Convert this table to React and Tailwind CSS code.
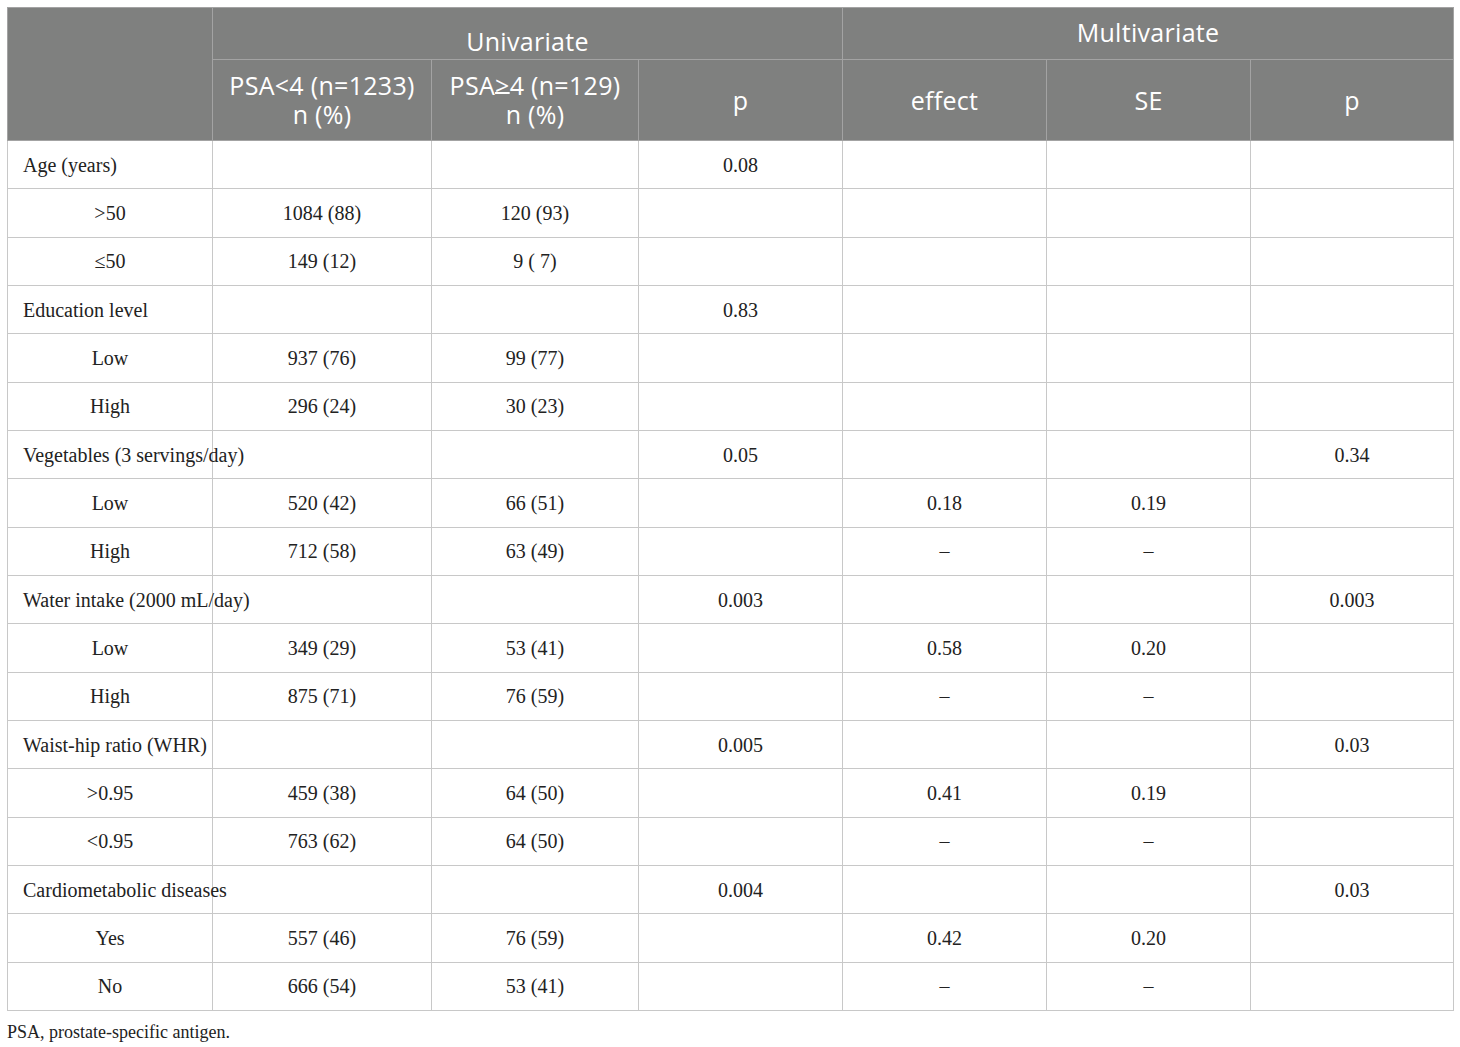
const rows = [
  { label: "Age (years)", group: true, p: "0.08" },
  { label: ">50", a: "1084 (88)", b: "120 (93)" },
  { label: "≤50", a: "149 (12)", b: "9 ( 7)" },
  { label: "Education level", group: true, p: "0.83" },
  { label: "Low", a: "937 (76)", b: "99 (77)" },
  { label: "High", a: "296 (24)", b: "30 (23)" },
  { label: "Vegetables (3 servings/day)", group: true, p: "0.05", mp: "0.34" },
  { label: "Low", a: "520 (42)", b: "66 (51)", effect: "0.18", se: "0.19" },
  { label: "High", a: "712 (58)", b: "63 (49)", effect: "–", se: "–" },
  { label: "Water intake (2000 mL/day)", group: true, p: "0.003", mp: "0.003" },
  { label: "Low", a: "349 (29)", b: "53 (41)", effect: "0.58", se: "0.20" },
  { label: "High", a: "875 (71)", b: "76 (59)", effect: "–", se: "–" },
  { label: "Waist-hip ratio (WHR)", group: true, p: "0.005", mp: "0.03" },
  { label: ">0.95", a: "459 (38)", b: "64 (50)", effect: "0.41", se: "0.19" },
  { label: "<0.95", a: "763 (62)", b: "64 (50)", effect: "–", se: "–" },
  { label: "Cardiometabolic diseases", group: true, p: "0.004", mp: "0.03" },
  { label: "Yes", a: "557 (46)", b: "76 (59)", effect: "0.42", se: "0.20" },
  { label: "No", a: "666 (54)", b: "53 (41)", effect: "–", se: "–" },
];

const th = "border border-[#a3a3a3] font-normal text-white text-center align-middle p-0";
const td = "border border-[#c8c8c8] text-center align-middle h-[48.33px] p-0 whitespace-nowrap";

export default function App() {
  return (
    <div className="bg-white min-h-[1047px] pl-[7px] pt-[7px] font-['Liberation_Serif',serif] text-[#222]">
      <table className="table-fixed border-collapse w-[1446px] text-[20px]">
        <colgroup>
          <col className="w-[205px]" />
          <col className="w-[219px]" />
          <col className="w-[207px]" />
          <col className="w-[204px]" />
          <col className="w-[204px]" />
          <col className="w-[204px]" />
          <col className="w-[203px]" />
        </colgroup>
        <thead className="bg-[#7f807f] font-['Open_Sans',sans-serif] text-[25px] leading-[29px] tracking-[0.3px]">
          <tr className="h-[52px]">
            <th rowSpan={2} className={th}></th>
            <th colSpan={3} className={th + " pt-[16px]"}>Univariate</th>
            <th colSpan={3} className={th + " pb-[2px]"}>Multivariate</th>
          </tr>
          <tr className="h-[81px]">
            <th className={th}>
              PSA&lt;4 (n=1233)
              <br />n (%)
            </th>
            <th className={th}>
              PSA<span className="underline underline-offset-[-3px]">&gt;</span>4 (n=129)
              <br />n (%)
            </th>
            <th className={th}>p</th>
            <th className={th}>effect</th>
            <th className={th}>SE</th>
            <th className={th}>p</th>
          </tr>
        </thead>
        <tbody>
          {rows.map((r, i) => (
            <tr key={i}>
              <td className={td + (r.group ? " text-left pl-[15px]" : "")}>{r.label}</td>
              <td className={td}>{r.a}</td>
              <td className={td}>{r.b}</td>
              <td className={td}>{r.p}</td>
              <td className={td}>{r.effect}</td>
              <td className={td}>{r.se}</td>
              <td className={td}>{r.mp}</td>
            </tr>
          ))}
        </tbody>
      </table>
      <p className="text-[18px] mt-[8px]">PSA, prostate-specific antigen.</p>
    </div>
  );
}
